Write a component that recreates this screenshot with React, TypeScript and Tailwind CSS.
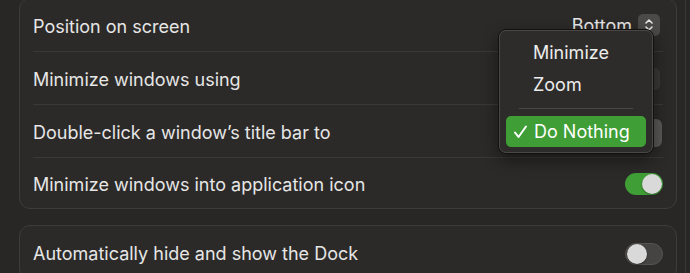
import React from 'react';

function Stepper({ className = '' }: { className?: string }) {
  return (
    <div className={`w-[22px] h-[22px] rounded-[5px] bg-[#4c4a48] flex items-center justify-center ${className}`}>
      <svg width="10" height="14" viewBox="0 0 10 14" fill="none" stroke="#e6e6e6" strokeWidth="1.6" strokeLinecap="round" strokeLinejoin="round">
        <path d="M2 5 L5 2 L8 5" />
        <path d="M2 9 L5 12 L8 9" />
      </svg>
    </div>
  );
}

function Toggle({ on }: { on: boolean }) {
  return (
    <div
      className={`w-[38px] h-[22px] rounded-full flex items-center px-[1px] ${
        on ? 'bg-[#3f9f36] justify-end' : 'bg-[#454443] border border-[#55534f] justify-start'
      }`}
    >
      <div className="w-[20px] h-[20px] rounded-full bg-[#d9d9d9] shadow-[0_1px_2px_rgba(0,0,0,0.4)]" />
    </div>
  );
}

function Row({ label, children, last, h = 'h-[53px]' }: { label: string; children?: React.ReactNode; last?: boolean; h?: string }) {
  return (
    <div className={`${h} flex items-center justify-between pt-[2px] ${last ? '' : 'border-b border-[#3b3937]'}`}>
      <span className="text-[18px] text-[#e6e6e6]">{label}</span>
      {children}
    </div>
  );
}

export default function App() {
  return (
    <div
      className="relative w-[690px] h-[273px] overflow-hidden bg-[#282725] flex"
      style={{ fontFamily: 'Inter, "Noto Sans", sans-serif' }}
    >
      <div className="w-[19px] shrink-0" />
      <div className="w-[658px] shrink-0 flex flex-col gap-[16px]">
        <div className="mt-[-2px] rounded-[11px] border border-[#3e3c3a] bg-[#2c2a28] px-[13px]">
          <Row label="Position on screen">
            <div className="flex items-center gap-[6px] mr-[3px] -mt-[2px]">
              <span className="text-[18px] text-[#e6e6e6]">Bottom</span>
              <Stepper />
            </div>
          </Row>
          <Row label="Minimize windows using">
            <div className="w-[120px] h-[22px] rounded-[5px] bg-[#3a3836] mr-[3px]" />
          </Row>
          <Row label="Double-click a window’s title bar to">
            <div className="w-[140px] h-[28px] rounded-[6px] bg-[#5a5856] mr-[1px] mt-[2px]" />
          </Row>
          <Row label="Minimize windows into application icon" last h="h-[50px]">
            <Toggle on />
          </Row>
        </div>
        <div className="rounded-[11px] border border-[#3e3c3a] bg-[#2c2a28] px-[13px]">
          <Row label="Automatically hide and show the Dock" last>
            <Toggle on={false} />
          </Row>
        </div>
      </div>
      <div className="w-[9px] shrink-0 border-r border-[#3a3836]" />

      {/* popup menu */}
      <div className="absolute left-[498px] top-[29px] w-[156px] h-[125px] rounded-[8px] border border-[#121110] bg-[#2e2c2a] shadow-[0_6px_16px_rgba(0,0,0,0.45)]">
        <div className="absolute inset-0 rounded-[7px] border border-[#4a4846] flex flex-col px-[6px] pt-[5px]">
          <div className="h-[32px] flex items-center pl-[27px] text-[18px] text-[#ececec]">Minimize</div>
          <div className="h-[32px] flex items-center pl-[27px] text-[18px] text-[#ececec]">Zoom</div>
          <div className="h-[16px] flex items-center px-[13px]">
            <div className="h-px w-full bg-[#4a4846]" />
          </div>
          <div className="h-[31px] rounded-[5px] bg-[#3f9e35] flex items-center pl-[7px] text-[18px] text-white">
            <svg width="15" height="14" viewBox="0 0 15 14" fill="none" stroke="#ffffff" strokeWidth="2" strokeLinecap="round" strokeLinejoin="round" className="mr-[6px]">
              <path d="M2 7.5 L5.5 12 L13 1.5" />
            </svg>
            <span>Do Nothing</span>
          </div>
        </div>
      </div>
    </div>
  );
}
